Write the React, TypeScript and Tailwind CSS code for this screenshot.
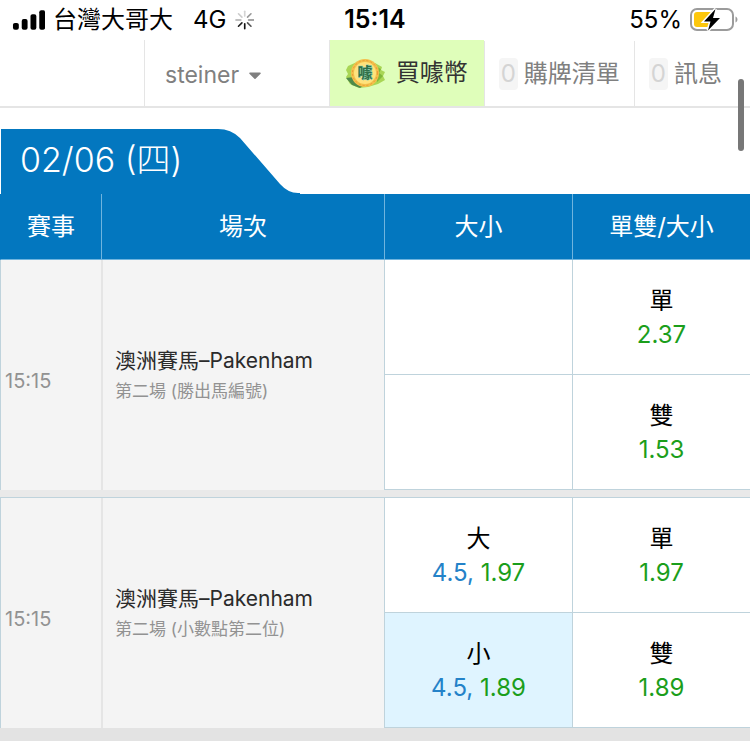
import { FaCaretDown } from "react-icons/fa"

type Odds = {
    label: string
    line?: string
    value: string
    selected?: boolean
}

type Match = {
    id: number
    time: string
    title: string
    detail: string
    rows: { size?: Odds; parity?: Odds }[]
}

const matches: Match[] = [
    {
        id: 1,
        time: "15:15",
        title: "澳洲賽馬–Pakenham",
        detail: "第二場 (勝出馬編號)",
        rows: [
            { parity: { label: "單", value: "2.37" } },
            { parity: { label: "雙", value: "1.53" } },
        ],
    },
    {
        id: 2,
        time: "15:15",
        title: "澳洲賽馬–Pakenham",
        detail: "第二場 (小數點第二位)",
        rows: [
            {
                size: { label: "大", line: "4.5", value: "1.97" },
                parity: { label: "單", value: "1.97" },
            },
            {
                size: { label: "小", line: "4.5", value: "1.89", selected: true },
                parity: { label: "雙", value: "1.89" },
            },
        ],
    },
]

function SignalIcon() {
    return (
        <svg width="34" height="22" viewBox="0 0 34 22" aria-hidden="true">
            <rect x="1" y="14" width="6" height="7" rx="2" />
            <rect x="10" y="10" width="6" height="11" rx="2" />
            <rect x="19" y="5" width="6" height="16" rx="2" />
            <rect x="28" y="1" width="6" height="20" rx="2" />
        </svg>
    )
}

function SpinnerIcon() {
    return (
        <svg
            width="20"
            height="20"
            viewBox="0 0 20 20"
            strokeWidth="1.7"
            strokeLinecap="round"
            aria-hidden="true"
        >
            <path d="M10 1v5" stroke="#d4d4d4" />
            <path d="M16.4 3.6l-3.5 3.5" stroke="#9a9a9a" />
            <path d="M19 10h-5" stroke="#888" />
            <path d="M16.4 16.4l-3.5-3.5" stroke="#555" />
            <path d="M10 19v-5" stroke="#111" />
            <path d="M3.6 16.4l3.5-3.5" stroke="#222" />
            <path d="M1 10h5" stroke="#aaa" />
            <path d="M3.6 3.6l3.5 3.5" stroke="#ccc" />
        </svg>
    )
}

function BatteryIcon() {
    return (
        <svg width="48" height="24" viewBox="0 0 48 24" aria-hidden="true">
            <rect x="1" y="1" width="42" height="21" rx="6" fill="#fff" stroke="#9b9b9b" strokeWidth="2" />
            <path d="M45.500 8.500c2.600 1 2.600 5 0 6z" fill="#9b9b9b" />
            <rect x="4" y="4" width="19" height="15" rx="3" fill="#fdc70c" />
            <path
                d="M25.500 1L14 13.500h6.500l-2.500 9L30 10h-7z"
                fill="#000"
                stroke="#fff"
                strokeWidth="3"
                paintOrder="stroke"
            />
        </svg>
    )
}

function CoinIcon() {
    return (
        <svg width="40" height="32" viewBox="0 0 40 32" aria-hidden="true">
            <path d="M2 9l9-4 18 1 7 4-1 3 4 2-2 4 2 4-7 4-10 3-9 1-9-4-4-7 2-3-2-4z" fill="#a9d655" />
            <path d="M29 9l6 3-2 4 4 3-6 6z" fill="#7fb838" />
            <path d="M0 21l8-1 9 9-3 2-8-3z" fill="#4f8a4a" />
            <circle cx="19" cy="16" r="14" fill="#f3c04c" />
            <circle cx="19" cy="16" r="11" fill="#ffe27c" />
            <circle cx="19" cy="16" r="12.500" fill="none" stroke="#ee9a35" strokeDasharray="2 2" />
            <text
                x="19"
                y="21"
                textAnchor="middle"
                fontSize="15"
                fontWeight="700"
                fill="#2f7048"
                stroke="#9bd3b4"
                strokeWidth="1"
                paintOrder="stroke"
            >
                噱
            </text>
        </svg>
    )
}

function StatusBar() {
    return (
        <header className="grid h-10 grid-cols-3 items-center bg-white pr-3 pl-3 text-2xl text-black">
            <div className="flex items-center whitespace-nowrap">
                <SignalIcon />
                <span className="ml-2">台灣大哥大</span>
                <span className="mr-2 ml-5">4G</span>
                <SpinnerIcon />
            </div>
            <time className="text-center text-[25px] font-semibold">15:14</time>
            <div className="flex items-center justify-end gap-2">
                <span>55%</span>
                <BatteryIcon />
            </div>
        </header>
    )
}

function NavCount({ count, label }: { count: number; label: string }) {
    return (
        <a href="#" className="flex items-center gap-1.5 border-l border-neutral-200 pr-3.5 pl-3.5 last:pr-7">
            <span className="rounded-sm bg-neutral-100 px-0.5 leading-8 text-neutral-300">{count}</span>
            <span>{label}</span>
        </a>
    )
}

function NavBar() {
    return (
        <nav className="flex h-17 border-b-2 border-neutral-200 bg-white pt-px text-2xl whitespace-nowrap text-[#808080]">
            <div className="-mt-px w-36" />
            <button className="-mt-px flex items-center gap-1.5 border-l border-neutral-200 pt-1 pl-5 text-[23px]">
                steiner
                <FaCaretDown className="size-5" />
            </button>
            <a
                href="#"
                className="-mt-px ml-auto flex items-center gap-2.5 border-l border-neutral-200 bg-[#dffeba] pr-4 pl-4 text-[#333]"
            >
                <CoinIcon />
                買噱幣
            </a>
            <NavCount count={0} label="購牌清單" />
            <NavCount count={0} label="訊息" />
        </nav>
    )
}

function OddsCell({ odds }: { odds?: Odds }) {
    return (
        <td
            className={`h-[115px] border-b border-l border-[#bfd3dc] p-0 ${
                odds?.selected ? "bg-[#dff4ff]" : "bg-white"
            }`}
        >
            {odds && (
                <button className="flex h-full w-full flex-col items-center justify-center pt-0.5 text-2xl leading-[34px]">
                    <span className="text-black">{odds.label}</span>
                    <span className="text-[#1b9e1b]">
                        {odds.line && <span className="text-[#2482c8]">{odds.line}, </span>}
                        {odds.value}
                    </span>
                </button>
            )}
        </td>
    )
}

function MatchRows({ match }: { match: Match }) {
    return (
        <tbody>
            {match.rows.map((row, index) => (
                <tr key={index}>
                    {index === 0 && (
                        <>
                            <td
                                rowSpan={2}
                                className="border-l border-[#bfd3dc] bg-[#f4f4f4] pt-3 pl-1 text-xl text-[#929292]"
                            >
                                {match.time}
                            </td>
                            <td rowSpan={2} className="border-l-2 border-neutral-200 bg-[#f4f4f4] pl-3">
                                <div className="text-[21px] leading-8 text-[#2b2b2b]">{match.title}</div>
                                <div className="text-[17px] leading-7 text-[#929292]">{match.detail}</div>
                            </td>
                        </>
                    )}
                    <OddsCell odds={row.size} />
                    <OddsCell odds={row.parity} />
                </tr>
            ))}
        </tbody>
    )
}

function DateTab() {
    return (
        <div className="relative h-[66px] w-[300px]">
            <svg className="absolute inset-0" width="300" height="66" viewBox="0 0 300 66" aria-hidden="true">
                <path d="M1 1H218Q231 1 240 10L280 56Q288 65 298 65H300V66H1z" fill="#0377bf" />
            </svg>
            <h2 className="relative pt-2 pl-5 text-[34px] leading-[48px] font-light text-white">02/06 (四)</h2>
        </div>
    )
}

export default function App() {
    const headings = ["賽事", "場次", "大小", "單雙/大小"]

    return (
        <div className="relative min-h-screen bg-[#e3e3e3] font-['Inter','Noto_Sans_CJK_TC',sans-serif]">
            <StatusBar />
            <NavBar />
            <main>
                <div className="bg-white pt-5">
                    <DateTab />
                </div>
                <table className="w-full table-fixed border-separate border-spacing-0">
                    <colgroup>
                        <col className="w-[101px]" />
                        <col />
                        <col className="w-[188px]" />
                        <col className="w-[178px]" />
                    </colgroup>
                    <thead>
                        <tr>
                            {headings.map((heading) => (
                                <th
                                    key={heading}
                                    className="h-[66px] border-b border-l border-[#6fb4de] bg-[#0377bf] p-0 text-2xl font-normal text-white first:border-l-[#0377bf]"
                                >
                                    {heading}
                                </th>
                            ))}
                        </tr>
                    </thead>
                    <MatchRows match={matches[0]} />
                    <tbody>
                        <tr>
                            <td colSpan={4} className="h-2 border-b border-[#bfd3dc] bg-[#e9e9e9] p-0" />
                        </tr>
                    </tbody>
                    <MatchRows match={matches[1]} />
                </table>
            </main>
            <div className="absolute top-[79px] right-1.5 h-18 w-1.5 rounded-full bg-[#777]" />
        </div>
    )
}
